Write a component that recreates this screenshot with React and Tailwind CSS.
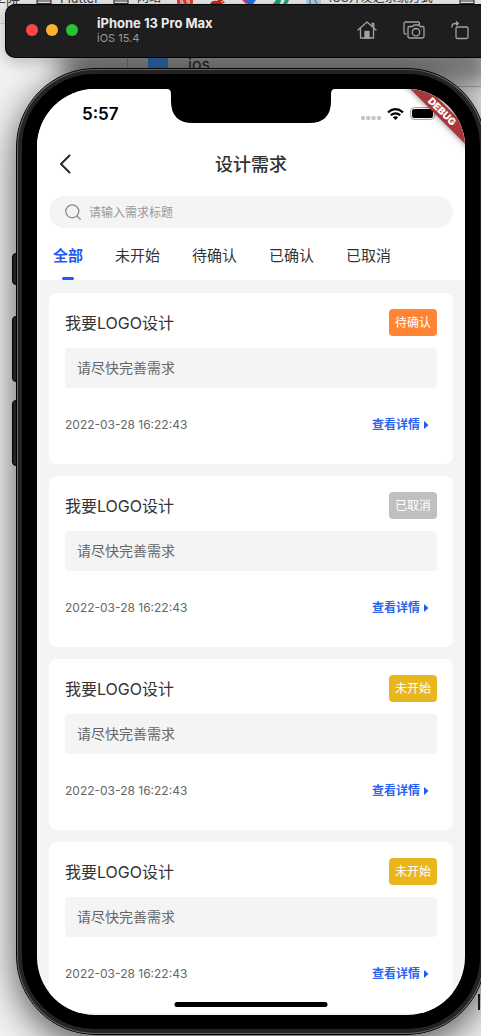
import React from "react";

const TABS = ["全部", "未开始", "待确认", "已确认", "已取消"];

const REQUESTS = [
  { id: 1, title: "我要LOGO设计", note: "请尽快完善需求", time: "2022-03-28 16:22:43", status: "待确认", tone: "bg-[#ff8534]" },
  { id: 2, title: "我要LOGO设计", note: "请尽快完善需求", time: "2022-03-28 16:22:43", status: "已取消", tone: "bg-[#bfbfbf]" },
  { id: 3, title: "我要LOGO设计", note: "请尽快完善需求", time: "2022-03-28 16:22:43", status: "未开始", tone: "bg-[#e8b71f]" },
  { id: 4, title: "我要LOGO设计", note: "请尽快完善需求", time: "2022-03-28 16:22:43", status: "未开始", tone: "bg-[#e8b71f]" },
];

function FolderMark() {
  return (
    <svg viewBox="0 0 16 5" className="h-[5px] w-4 shrink-0" fill="none" stroke="#3a3a3a" strokeWidth="1.2">
      <path d="M1 0v3.6h14V0M1 1h14" />
    </svg>
  );
}

function Desktop() {
  return (
    <div aria-hidden="true" className="absolute inset-0 overflow-hidden bg-[#f2f2f2]">
      <div className="absolute inset-x-0 top-0 h-[24px] border-b border-[#cfcfcf] bg-[#e9e9e9]" />
      <div className="absolute -top-2 left-[-8px] text-sm leading-4 text-[#3a3a3a]">学院</div>
      <div className="absolute -top-[10px] left-[60px] text-[13px] leading-4 text-[#3a3a3a]">Flutter</div>
      <div className="absolute -top-[10px] left-[137px] text-xs leading-4 text-[#3a3a3a]">网站</div>
      <div className="absolute -top-[10px] left-[329px] whitespace-nowrap text-xs leading-4 text-[#3a3a3a]">iOS开发之系统方式</div>
      <div className="absolute left-9 top-0"><FolderMark /></div>
      <div className="absolute left-[113px] top-0"><FolderMark /></div>
      <div className="absolute left-[459px] top-0"><FolderMark /></div>
      <svg className="absolute left-[176px] top-0 h-1 w-[150px]" viewBox="0 0 150 4">
        <path d="M1 0h16v3q0 1-1 1H2q-1 0-1-1z" fill="#d9402f" />
        <path d="M4 1h3M10 1h4M4 3h4M11 3h3" stroke="#fff" />
        <path d="M34 4q2-4 7-3l1-1h4l3 2-3 2z" fill="#d4221b" />
        <path d="M44 1h4l-2 2z" fill="#f0a21d" />
        <path d="M66 0h6l1 3-3 1z" fill="#ec2f6c" />
        <path d="M70 0h10l-3 4h-5z" fill="#1d73e8" />
        <path d="M97 4l3-4h5l-1 4zM107 4l2-4h4l-2 4z" fill="#1ba26b" />
        <path d="M130 0h15v4h-15z" fill="#b3cfe2" />
        <path d="M134 0v4M139 0l2 4" stroke="#5b91b7" strokeWidth="1.5" />
      </svg>
      <div className="absolute right-0 top-[86px] h-px w-6 bg-[#9fb0bd]" />
      <div className="absolute -right-4 left-[60px] top-[50px] h-9 rounded-full bg-[#777] blur-[12px]" />
      <div className="absolute left-[127px] top-[57px] h-3 w-px bg-[#707070]" />
      <div className="absolute left-[148px] top-[57px] h-3 w-5 bg-[#2f6cb0]" />
      <div className="absolute left-[188px] top-[54px] text-base leading-5 text-[#1d1d1d]">ios</div>
      <div className="absolute bottom-[26px] right-[1px] h-4 w-0.5 bg-[#222]" />
    </div>
  );
}

function HomeIcon() {
  return (
    <svg viewBox="0 0 20 18" className="h-[18px] w-5" fill="none" stroke="#a2a2a2" strokeWidth="1.3" strokeLinecap="round" strokeLinejoin="round">
      <path d="M1 9 10 1l9 8M3.5 7v10h13V7M15.200 5.200V2.500h1.600v4" />
      <path d="M8 17v-6.500h4V17z" fill="#a2a2a2" />
    </svg>
  );
}

function CameraIcon() {
  return (
    <svg viewBox="0 0 22 18" className="h-[18px] w-[22px]" fill="none" stroke="#a2a2a2" strokeWidth="1.300" strokeLinejoin="round">
      <path d="M3.500 13H2.500Q1 13 1 11.500v-9Q1 1 2.500 1h12.500q1.500 0 1.500 1.500V4" />
      <path d="M6.500 5.500h3L11 4h4.500L17 5.500h2.500Q21 5.500 21 7v8.500q0 1.500-1.500 1.500h-13Q5 17 5 15.500V7q0-1.500 1.500-1.500z" />
      <circle cx="13" cy="11.200" r="3.700" />
      <circle cx="18.500" cy="8" r=".5" fill="#a2a2a2" stroke="none" />
    </svg>
  );
}

function RotateIcon() {
  return (
    <svg viewBox="0 0 18 19" className="h-[19px] w-[18px]" fill="none" stroke="#a2a2a2" strokeWidth="1.300" strokeLinecap="round" strokeLinejoin="round">
      <rect x="5" y="6" width="12" height="11.500" rx="1.500" />
      <path d="M1 6V5q0-2.500 3-2.500h3M5.500.8 7.300 2.500 5.500 4.200" />
    </svg>
  );
}

function SimulatorBar() {
  return (
    <header className="relative z-10 ml-[5px] mt-1 flex h-[54px] shrink-0 items-center rounded-l-[10px] border-y border-l border-black bg-[#1e1e1e] pb-0.5 pl-5 pr-3 shadow-[0_4px_16px_rgba(0,0,0,0.25)]">
      <div className="flex gap-2">
        <button aria-label="Close" className="size-3 rounded-full bg-[#ff4747]" />
        <button aria-label="Minimize" className="size-3 rounded-full bg-[#ffb02c]" />
        <button aria-label="Zoom" className="size-3 rounded-full bg-[#29c232]" />
      </div>
      <div className="ml-[19px] flex-1">
        <div className="text-[13px] font-bold leading-4 text-[#ececec]">iPhone 13 Pro Max</div>
        <div className="text-[11px] leading-[14px] text-[#9a9a9a]">iOS 15.4</div>
      </div>
      <div className="flex items-center gap-[26px]">
        <button aria-label="Home"><HomeIcon /></button>
        <button aria-label="Screenshot"><CameraIcon /></button>
        <button aria-label="Rotate"><RotateIcon /></button>
      </div>
    </header>
  );
}

function Notch() {
  return (
    <svg aria-hidden="true" viewBox="0 0 168 34" className="absolute left-1/2 top-0 h-[34px] w-[168px] -translate-x-1/2">
      <path d="M0 0q4 0 4 5v7q0 22 22 22h116q22 0 22-22V5q0-5 4-5z" fill="#000" />
    </svg>
  );
}

function StatusBar() {
  return (
    <div className="flex h-[47px] shrink-0 items-center justify-between pl-[45px] pr-7 pt-0.5">
      <span className="text-[17px] font-semibold leading-5 text-black">5:57</span>
      <div className="flex items-center gap-[6px]">
        <svg viewBox="0 0 20 4" className="mt-2 h-1 w-5" fill="#c6c6c6">
          <rect x="0" width="4" height="4" rx="1.300" />
          <rect x="5.300" width="4" height="4" rx="1.300" />
          <rect x="10.600" width="4" height="4" rx="1.300" />
          <rect x="16" width="4" height="4" rx="1.300" />
        </svg>
        <svg viewBox="0 0 17 12" className="h-3 w-[17px]" fill="none" stroke="#000" strokeWidth="2.200">
          <path d="M1 4.300q7.500-6.200 15 0M3.700 7.200q4.800-3.800 9.600 0" />
          <path d="M8.500 12 5.800 9.300q2.700-2.200 5.400 0z" fill="#000" stroke="none" />
        </svg>
        <svg viewBox="0 0 27 13" className="h-[13px] w-[27px]" fill="none">
          <rect x=".6" y=".6" width="23.800" height="11.800" rx="3.500" stroke="#999" />
          <rect x="2" y="2" width="21" height="9" rx="2.200" fill="#000" />
          <path d="M25.500 4.500q1.500.5 1.500 2t-1.500 2z" fill="#999" />
        </svg>
      </div>
    </div>
  );
}

function DebugBanner() {
  return (
    <div className="pointer-events-none absolute right-0 top-0 size-[68px] overflow-hidden">
      <div className="absolute -right-[27px] top-[16px] h-[13px] w-[100px] rotate-45 bg-[#a8373c] text-center text-[10px] font-black leading-[13px] text-white shadow-[0_0_6px_rgba(0,0,0,0.5)]">
        DEBUG
      </div>
    </div>
  );
}

function RequestCard({ item }) {
  return (
    <li className="flex h-[171px] shrink-0 flex-col rounded-lg bg-white px-4 pt-4">
      <div className="flex items-center justify-between">
        <h2 className="text-base leading-6 text-[#333]">{item.title}</h2>
        <span className={`rounded px-1.5 text-xs leading-[27px] text-white ${item.tone}`}>{item.status}</span>
      </div>
      <p className="mt-3 rounded bg-[#f4f4f4] px-3 text-sm leading-10 text-[#666]">{item.note}</p>
      <div className="mt-6 flex items-center justify-between pr-2">
        <time className="text-xs leading-6 text-[#666]">{item.time}</time>
        <a href="#detail" className="flex items-center gap-1 pt-px text-xs font-bold leading-6 text-[#2c64f2]">
          查看详情
          <svg viewBox="0 0 5 8" className="h-2 w-[5px]" fill="#1d5cf0"><path d="M0 0 4.500 4 0 8z" /></svg>
        </a>
      </div>
    </li>
  );
}

function Screen() {
  return (
    <main className="relative flex min-h-0 flex-1 flex-col overflow-hidden rounded-[58px] bg-[#f4f4f4]">
      <div className="shrink-0 bg-white">
        <StatusBar />
        <nav className="relative flex h-14 items-center justify-center">
          <button aria-label="返回" className="absolute left-[22px]">
            <svg viewBox="0 0 12 20" className="h-5 w-3" fill="none" stroke="#2b2b2b" strokeWidth="2" strokeLinecap="round" strokeLinejoin="round">
              <path d="M10.500 1.500 2 10l8.500 8.500" />
            </svg>
          </button>
          <h1 className="pt-0.5 text-lg font-medium leading-6 text-[#333]">设计需求</h1>
        </nav>
        <label className="mx-3 mt-1 flex h-8 items-center gap-2 rounded-full bg-[#f4f4f4] px-4">
          <svg viewBox="0 0 16 16" className="size-4 shrink-0" fill="none" stroke="#8c8c8c" strokeWidth="1.300" strokeLinecap="round">
            <circle cx="7.300" cy="7.300" r="6.500" />
            <path d="m12 12 3.300 3.300" />
          </svg>
          <input
            aria-label="请输入需求标题"
            placeholder="请输入需求标题"
            className="min-w-0 flex-1 bg-transparent pt-0.5 text-xs leading-4 text-[#333] outline-none placeholder:text-[#999]"
          />
        </label>
        <div role="tablist" className="flex h-[52px] gap-8 px-4">
          {TABS.map((tab, i) => (
            <button
              key={tab}
              role="tab"
              aria-selected={i === 0}
              className={`flex flex-col items-center justify-between pt-4 text-[15px] leading-6 ${i === 0 ? "font-bold text-[#1d5cf0]" : "text-[#333]"}`}
            >
              {tab}
              {i === 0 && <span className="h-[3px] w-3 rounded-full bg-[#1d5cf0]" />}
            </button>
          ))}
        </div>
      </div>
      <ul className="flex min-h-0 flex-1 flex-col gap-3 overflow-hidden px-3 pt-[13px]">
        {REQUESTS.map((item) => (
          <RequestCard key={item.id} item={item} />
        ))}
      </ul>
      <Notch />
      <DebugBanner />
      <div className="absolute bottom-2 left-1/2 h-[5px] w-[153px] -translate-x-1/2 rounded-full bg-black" />
    </main>
  );
}

export default function App() {
  return (
    <div className="relative flex h-screen flex-col overflow-hidden font-['Inter','Noto_Sans_CJK_SC',sans-serif]">
      <Desktop />
      <SimulatorBar />
      <div className="relative -mr-[5px] mb-px ml-4 mt-[10px] flex min-h-0 flex-1 flex-col rounded-[79px] shadow-[0_10px_36px_rgba(0,0,0,0.65)]">
        <div className="absolute -left-1 top-[185px] h-8 w-2 rounded-l-sm border border-black bg-[#222]" />
        <div className="absolute -left-1 top-[248px] h-[66px] w-2 rounded-l-sm border border-black bg-[#222]" />
        <div className="absolute -left-1 top-[332px] h-[66px] w-2 rounded-l-sm border border-black bg-[#222]" />
        <div className="relative flex min-h-0 flex-1 flex-col rounded-[79px] border border-black bg-[#666] p-px">
          <div className="flex min-h-0 flex-1 flex-col rounded-[77px] border-4 border-[#242424] bg-black px-[15px] pb-[14px] pt-[15px]">
            <Screen />
          </div>
        </div>
      </div>
    </div>
  );
}
